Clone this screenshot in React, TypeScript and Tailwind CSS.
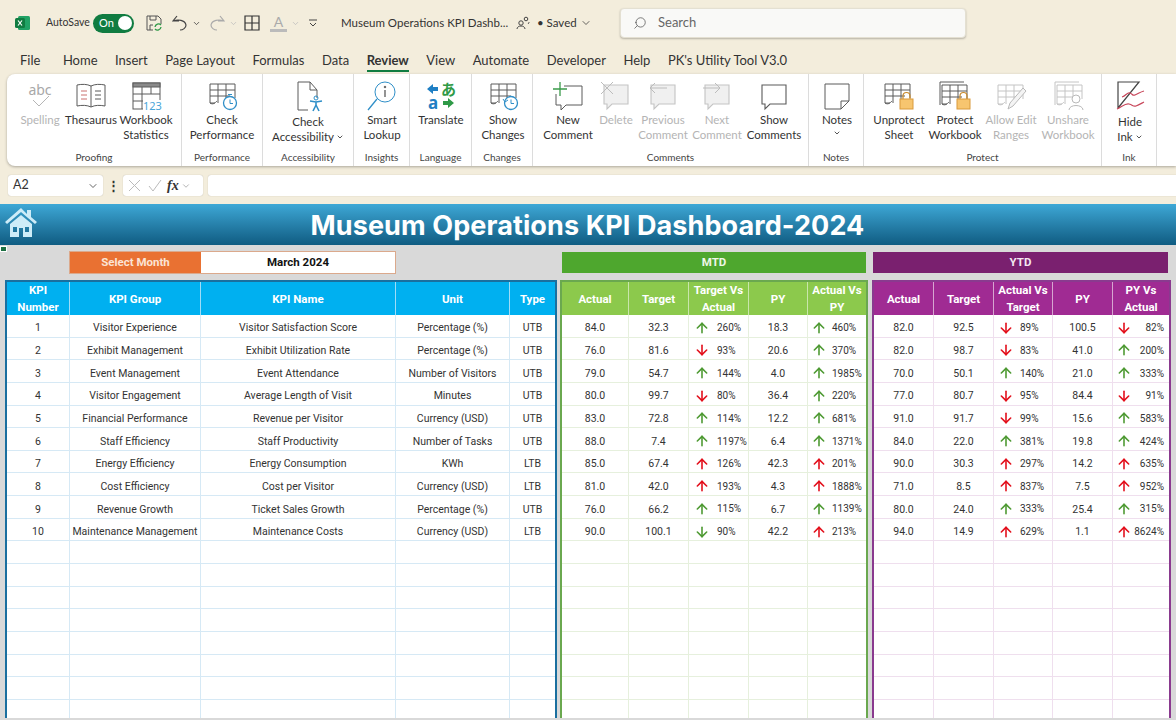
import React from "react";
import { ArrowDown, ArrowUp, ChevronDown, Search } from "lucide-react";

type Dir = "ug" | "dr" | "ur" | "dg";
type Perf = [string, string, Dir, string, string, Dir, string];

const kpis = [
  ["1", "Visitor Experience", "Visitor Satisfaction Score", "Percentage (%)", "UTB"],
  ["2", "Exhibit Management", "Exhibit Utilization Rate", "Percentage (%)", "UTB"],
  ["3", "Event Management", "Event Attendance", "Number of Visitors", "UTB"],
  ["4", "Visitor Engagement", "Average Length of Visit", "Minutes", "UTB"],
  ["5", "Financial Performance", "Revenue per Visitor", "Currency (USD)", "UTB"],
  ["6", "Staff Efficiency", "Staff Productivity", "Number of Tasks", "UTB"],
  ["7", "Energy Efficiency", "Energy Consumption", "KWh", "LTB"],
  ["8", "Cost Efficiency", "Cost per Visitor", "Currency (USD)", "LTB"],
  ["9", "Revenue Growth", "Ticket Sales Growth", "Percentage (%)", "UTB"],
  ["10", "Maintenance Management", "Maintenance Costs", "Currency (USD)", "LTB"],
];

const mtd: Perf[] = [
  ["84.0", "32.3", "ug", "260%", "18.3", "ug", "460%"],
  ["76.0", "81.6", "dr", "93%", "20.6", "ug", "370%"],
  ["79.0", "54.7", "ug", "144%", "4.0", "ug", "1985%"],
  ["80.0", "99.7", "dr", "80%", "36.4", "ug", "220%"],
  ["83.0", "72.8", "ug", "114%", "12.2", "ug", "681%"],
  ["88.0", "7.4", "ug", "1197%", "6.4", "ug", "1371%"],
  ["85.0", "67.4", "ur", "126%", "42.3", "ur", "201%"],
  ["81.0", "42.0", "ur", "193%", "4.3", "ur", "1888%"],
  ["76.0", "66.2", "ug", "115%", "6.7", "ug", "1139%"],
  ["90.0", "100.1", "dg", "90%", "42.2", "ur", "213%"],
];

const ytd: Perf[] = [
  ["82.0", "92.5", "dr", "89%", "100.5", "dr", "82%"],
  ["82.0", "98.7", "dr", "83%", "41.0", "ug", "200%"],
  ["70.0", "50.1", "ug", "140%", "21.0", "ug", "333%"],
  ["77.0", "80.7", "dr", "95%", "84.4", "dr", "91%"],
  ["91.0", "91.7", "dr", "99%", "15.6", "ug", "583%"],
  ["84.0", "22.0", "ug", "381%", "19.8", "ug", "424%"],
  ["90.0", "30.3", "ur", "297%", "14.2", "ur", "635%"],
  ["71.0", "8.5", "ur", "837%", "7.5", "ur", "952%"],
  ["80.0", "24.0", "ug", "333%", "25.4", "ug", "315%"],
  ["94.0", "14.9", "ur", "629%", "1.1", "ur", "8624%"],
];

const blanks = Array.from({ length: 8 });

// ribbon icons, all on a 32x28 box
const Ico = ({ children }: { children: React.ReactNode }) => (
  <svg width="32" height="28" viewBox="0 0 32 28" fill="none" stroke="#5a5a5a" strokeWidth="1" className="overflow-visible">
    {children}
  </svg>
);

const Cells = ({ x = 4, y = 2, c = "#5a5a5a" }: { x?: number; y?: number; c?: string }) => (
  <g stroke={c}>
    <path d={`M${x + 5} ${y + 19}H${x}V${y}H${x + 25}V${y + 14}`} />
    <path d={`M${x} ${y + 6}H${x + 25}M${x} ${y + 12}H${x + 20}M${x + 8} ${y}V${y + 19}M${x + 16} ${y}V${y + 16}`} />
    <path d={`M${x} ${y + 19}c3 2 5 0 7-2`} />
  </g>
);

const Lock = ({ x, y }: { x: number; y: number }) => (
  <g>
    <path d={`M${x + 3} ${y + 6}v-3a3.5 3.5 0 0 1 7 0v3`} stroke="#c98a2c" strokeWidth="1.2" />
    <rect x={x} y={y + 6} width="13" height="10" fill="#f7c56f" stroke="#d99a3c" />
  </g>
);

const Bubble = ({ c = "#5a5a5a", f = "none" }: { c?: string; f?: string }) => (
  <path d="M4 3h24v19H12l-5 5v-5H4z" stroke={c} fill={f} strokeWidth="1.1" />
);

const icons: Record<string, React.ReactNode> = {
  spelling: (
    <Ico>
      <text x="16" y="13" textAnchor="middle" fontSize="14" fill="#a8a8a8" stroke="none" fontFamily="Noto Sans">abc</text>
      <path d="M9 18l6 6 10-10" stroke="#b5b5b5" />
    </Ico>
  ),
  thesaurus: (
    <Ico>
      <path d="M2 3c5-1 10-1 14 1 4-2 9-2 14-1v21c-5-1-10-1-14 1-4-2-9-2-14-1z" />
      <path d="M16 4v21" />
      <path d="M6 9h6M6 13h6M6 17h6" stroke="#c9706f" />
      <path d="M20 9h6M20 13h6M20 17h6" />
    </Ico>
  ),
  workbook: (
    <Ico>
      <rect x="3" y="1" width="27" height="26" />
      <rect x="3" y="1" width="27" height="4" fill="#8a8a8a" />
      <path d="M3 12h27M3 19h11M12 5v22M21 5v7" />
      <rect x="13" y="18" width="18" height="10" fill="#fff" stroke="none" />
      <text x="13" y="27.500" fontSize="11" fill="#4aa5d8" stroke="none" fontFamily="Noto Sans">123</text>
    </Ico>
  ),
  performance: (
    <Ico>
      <Cells />
      <circle cx="24" cy="21" r="6.5" stroke="#2f8fc8" strokeWidth="1.3" fill="#fff" />
      <path d="M24 17.5v4h3M22 12.5h4" stroke="#2f8fc8" />
    </Ico>
  ),
  accessibility: (
    <Ico>
      <path d="M6 28V0h12l7 8v8M6 28h10M18 0v8h7" />
      <circle cx="24" cy="16" r="2" stroke="#2f8fc8" />
      <path d="M18 19l6 1 6-1M24 20v3l-3 6M24 23l3 6" stroke="#2f8fc8" strokeWidth="1.6" />
    </Ico>
  ),
  smart: (
    <Ico>
      <circle cx="19" cy="10" r="10" stroke="#2f8fc8" />
      <path d="M11 17L2 28" stroke="#2f8fc8" strokeWidth="1.3" />
      <path d="M19 8v7" stroke="#5a5a5a" strokeWidth="1.3" />
      <circle cx="19" cy="5" r=".8" fill="#5a5a5a" />
    </Ico>
  ),
  translate: (
    <Ico>
      <path d="M13 5H8V2L2 7l6 5V9h5z" fill="#1f7fc4" stroke="none" />
      <text x="16" y="13" fontSize="15" fontWeight="700" fill="#2f9a47" stroke="none" fontFamily="Noto Sans CJK JP">あ</text>
      <text x="3" y="27" fontSize="17" fontWeight="700" fill="#1f7fc4" stroke="none" fontFamily="Noto Sans">a</text>
      <path d="M18 19h5v-3l6 5-6 5v-3h-5z" fill="#2f9a47" stroke="none" />
    </Ico>
  ),
  changes: (
    <Ico>
      <Cells />
      <circle cx="24" cy="21" r="6.5" stroke="#2f8fc8" strokeWidth="1.3" fill="#fff" />
      <path d="M24 17.5v4h3M16 17l2 3 3-2" stroke="#2f8fc8" />
    </Ico>
  ),
  newComment: (
    <Ico>
      <path d="M12 4h18v19H14l-5 5v-5H4V12" stroke="#5a5a5a" />
      <path d="M8 0v14M1 7h14" stroke="#3a9a4a" strokeWidth="1.3" />
    </Ico>
  ),
  del: (
    <Ico>
      <Bubble c="#c4c4c4" f="#f0f0f0" />
      <path d="M1 0l12 12M13 0L1 12" stroke="#bcbcbc" />
    </Ico>
  ),
  prev: (
    <Ico>
      <Bubble c="#c4c4c4" f="#f0f0f0" />
      <path d="M20 6H3M8 1L3 6l5 5" stroke="#bcbcbc" />
    </Ico>
  ),
  next: (
    <Ico>
      <Bubble c="#c4c4c4" f="#f0f0f0" />
      <path d="M2 6h17M14 1l5 5-5 5" stroke="#bcbcbc" />
    </Ico>
  ),
  show: (
    <Ico>
      <Bubble />
    </Ico>
  ),
  notes: (
    <Ico>
      <path d="M4 2h24v17l-8 8H4z" />
      <path d="M28 19h-8v8" />
    </Ico>
  ),
  unprotect: (
    <Ico>
      <Cells x={2} />
      <Lock x={17} y={11} />
    </Ico>
  ),
  protect: (
    <Ico>
      <path d="M1 23V0h24" />
      <Cells x={3} y={3} />
      <Lock x={18} y={11} />
    </Ico>
  ),
  allow: (
    <Ico>
      <Cells x={3} y={3} c="#c4c4c4" />
      <path d="M28 6l3 3-13 15-5 3 2-6z" stroke="#b9b9b9" fill="#f4f4f4" />
    </Ico>
  ),
  unshare: (
    <Ico>
      <path d="M3 23V0h24" stroke="#c4c4c4" />
      <Cells x={5} y={3} c="#c4c4c4" />
      <circle cx="24" cy="17" r="4" stroke="#b9b9b9" fill="#fff" />
      <path d="M17 28c0-6 14-6 14 0" stroke="#b9b9b9" fill="#fff" />
    </Ico>
  ),
  ink: (
    <Ico>
      <path d="M4 26V0h21L4 26" stroke="#444" strokeWidth="1.2" />
      <path d="M8 15c4-1 5-5 8-4s2 3 5 2 5-3 9-4M3 27c5-2 8-6 12-5s4 3 7 2 6-3 8-4" stroke="#c8465a" strokeWidth="1.2" />
    </Ico>
  ),
};

const RibbonBtn = ({
  icon,
  lines,
  w,
  off,
  caret,
  low,
}: {
  icon: string;
  lines: string[];
  w: string;
  off?: boolean;
  caret?: boolean;
  low?: boolean;
}) => (
  <div className={`flex flex-col items-center shrink-0 ${w}`}>
    <div className="h-[28px] flex justify-center">{icons[icon]}</div>
    <div className={`whitespace-nowrap text-center text-[11.5px] leading-[15px] ${low ? "mt-[4px]" : "mt-[2px]"} ${off ? "text-[#b4b4b4]" : "text-[#333]"}`}>
      {lines.map((l, i) => (
        <div key={l} className="flex items-center justify-center gap-[2px]">
          {l}
          {caret && i === lines.length - 1 && <ChevronDown size={8} strokeWidth={2.5} />}
        </div>
      ))}
    </div>
  </div>
);

const Group = ({ label, w, pl, children }: { label: string; w: string; pl: string; children: React.ReactNode }) => (
  <div className={`relative h-full shrink-0 border-r border-[#dcdcdc] ${w}`}>
    <div className={`flex pt-[8px] ${pl}`}>{children}</div>
    <div className="absolute bottom-[2px] left-0 right-0 text-center text-[10px] leading-[14px] text-[#444]">{label}</div>
  </div>
);

const ArrowMark = ({ d }: { d: Dir }) => {
  const color = d === "ug" || d === "dg" ? "text-[#4e9a33]" : "text-[#e3101c]";
  return d === "ug" || d === "ur" ? (
    <ArrowUp size={16} strokeWidth={2.4} className={`shrink-0 ${color}`} />
  ) : (
    <ArrowDown size={16} strokeWidth={2.4} className={`shrink-0 ${color}`} />
  );
};

const Perfs = ({ rows, cols, line, pad1, pad2, lastRight }: { rows: Perf[]; cols: string; line: string; pad1: string; pad2: string; lastRight?: boolean }) => (
  <>
    {rows.map((r, i) => (
      <div key={i} className={`grid h-[22.65px] border-b ${cols} ${line}`}>
        <div className={`flex items-center justify-center pt-[5px] border-r ${line}`}>{r[0]}</div>
        <div className={`flex items-center justify-center pt-[5px] border-r ${line}`}>{r[1]}</div>
        <div className={`flex items-center pt-[4px] border-r text-[10px] ${pad1} ${line}`}>
          <ArrowMark d={r[2]} />
          <span>{r[3]}</span>
        </div>
        <div className={`flex items-center justify-center pt-[5px] border-r ${line}`}>{r[4]}</div>
        <div className={`flex items-center pt-[4px] text-[10px] ${pad2}`}>
          <ArrowMark d={r[5]} />
          <span className={lastRight ? "ml-auto pr-[5px]" : ""}>{r[6]}</span>
        </div>
      </div>
    ))}
    {blanks.map((_, i) => (
      <div key={i} className={`grid h-[22.65px] border-b ${cols} ${line}`}>
        <div className={`border-r ${line}`} />
        <div className={`border-r ${line}`} />
        <div className={`border-r ${line}`} />
        <div className={`border-r ${line}`} />
        <div />
      </div>
    ))}
  </>
);

const HeadCell = ({ children, last, line }: { children: React.ReactNode; last?: boolean; line: string }) => (
  <div className={`flex items-center justify-center text-center font-bold text-white text-[11.5px] leading-[17px] ${last ? "" : `border-r ${line}`}`}>
    {children}
  </div>
);

const leftCols = "grid-cols-[63px_131px_195px_114px_45px]";
const mtdCols = "grid-cols-[67px_60px_60px_59px_58px]";
const ytdCols = "grid-cols-[60px_60px_59px_60px_56px]";

export default function App() {
  return (
    <div className="w-[1176px] h-[720px] overflow-hidden flex flex-col bg-[#f3eddc] text-[#333] font-['Lato','Noto_Sans',sans-serif]">
      {/* Title bar */}
      <div className="h-[44px] flex items-center shrink-0 pt-[2px] text-[#333]">
        <svg width="16" height="16" viewBox="0 0 16 16" className="ml-[15px]">
          <rect x="3" y="1" width="12" height="14" rx="1.5" fill="#21a366" />
          <rect x="0" y="3" width="10" height="10" rx="1.5" fill="#107c41" />
          <path d="M3 5.5l4 5M7 5.5l-4 5" stroke="#fff" strokeWidth="1.2" />
        </svg>
        <span className="ml-[15px] w-[41px] text-[10.5px] whitespace-nowrap">AutoSave</span>
        <div className="ml-[6px] w-[41px] h-[19px] rounded-full bg-[#107c41] flex items-center justify-between pl-[6px] pr-[2px] text-white text-[11px]">
          On
          <span className="w-[14px] h-[14px] rounded-full bg-white" />
        </div>
        <svg width="16" height="16" viewBox="0 0 16 16" fill="none" stroke="#555" className="ml-[12px]">
          <path d="M1 1h11l3 3v5M1 1v14h6M4 1v4h6V1M4 15v-5h3" />
          <path d="M9 12a3.500 3.500 0 0 1 6-2M15 12a3.500 3.500 0 0 1-6 2" stroke="#2f9a47" strokeWidth="1.3" />
        </svg>
        <svg width="16" height="16" viewBox="0 0 16 16" fill="none" stroke="#444" strokeWidth="1.2" className="ml-[10px]">
          <path d="M5 1L1 6h6M1 6c5-2 12-1 13 4 0 3-3 5-6 5" />
        </svg>
        <ChevronDown size={9} strokeWidth={2} className="ml-[4px]" />
        <svg width="16" height="16" viewBox="0 0 16 16" fill="none" stroke="#aaa" strokeWidth="1.2" className="ml-[8px]">
          <path d="M11 1l4 5H9M15 6C10 4 3 5 2 10c0 3 3 5 6 5" />
        </svg>
        <ChevronDown size={9} strokeWidth={2} className="ml-[4px] text-[#bbb]" />
        <svg width="16" height="16" viewBox="0 0 16 16" fill="none" stroke="#333" strokeWidth="1.2" className="ml-[6px]">
          <path d="M1 1h14v14H1zM8 1v14M1 8h14" />
        </svg>
        <div className="ml-[10px] w-[17px] flex flex-col items-center text-[14px] leading-[14px] text-[#aaa] border-b-[3px] border-[#bbb]">A</div>
        <ChevronDown size={9} strokeWidth={2} className="ml-[4px] text-[#bbb]" />
        <svg width="10" height="10" viewBox="0 0 10 10" fill="none" stroke="#444" className="ml-[8px]">
          <path d="M1 2h8M2 5l3 3 3-3" />
        </svg>
        <span className="ml-[23px] w-[165px] text-[11.5px] whitespace-nowrap">Museum Operations KPI Dashb...</span>
        <svg width="14" height="14" viewBox="0 0 14 14" fill="none" stroke="#444" className="ml-[10px]">
          <circle cx="5" cy="7" r="2.200" />
          <path d="M1 13c0-4 8-4 8 0" />
          <circle cx="10" cy="3" r="1.800" />
          <path d="M12 8c1-1 1-2 1-2" />
        </svg>
        <span className="ml-[7px] w-[41px] text-[11.5px] whitespace-nowrap">• Saved</span>
        <ChevronDown size={12} strokeWidth={1.5} className="ml-[2px]" />
        <div className="ml-[28px] w-[346px] h-[30px] rounded-[4px] bg-[#f9f9f7] border border-[#e4e0d2] shadow-[0_1px_2px_rgba(0,0,0,0.25)] flex items-center pl-[12px] text-[13px] text-[#666]">
          <Search size={14} strokeWidth={1.3} className="-scale-x-100 text-[#555]" />
          <span className="ml-[11px]">Search</span>
        </div>
      </div>

      {/* Tabs */}
      <div className="h-[30px] shrink-0 flex items-start pt-[6px] pl-[20px] gap-[17.5px] text-[13px] leading-[20px] text-[#333]">
        <span className="mr-[5px]">File</span>
        <span>Home</span>
        <span>Insert</span>
        <span>Page Layout</span>
        <span>Formulas</span>
        <span>Data</span>
        <span className="relative font-bold">
          Review
          <span className="absolute left-0 right-0 top-[20px] h-[2px] bg-[#107c41]" />
        </span>
        <span>View</span>
        <span>Automate</span>
        <span>Developer</span>
        <span>Help</span>
        <span>PK's Utility Tool V3.0</span>
      </div>

      {/* Ribbon */}
      <div className="ml-[7px] h-[92px] shrink-0 bg-white rounded-l-lg shadow-[0_1px_3px_rgba(0,0,0,0.3)] flex">
        <Group label="Proofing" w="w-[175px]" pl="pl-[10px]">
          <RibbonBtn icon="spelling" lines={["Spelling"]} w="w-[46px]" off />
          <RibbonBtn icon="thesaurus" lines={["Thesaurus"]} w="w-[56px]" />
          <RibbonBtn icon="workbook" lines={["Workbook", "Statistics"]} w="w-[54px]" />
        </Group>
        <Group label="Performance" w="w-[81px]" pl="pl-[10px]">
          <RibbonBtn icon="performance" lines={["Check", "Performance"]} w="w-[60px]" />
        </Group>
        <Group label="Accessibility" w="w-[91px]" pl="pl-[10px]">
          <RibbonBtn icon="accessibility" lines={["Check", "Accessibility"]} w="w-[70px]" caret low />
        </Group>
        <Group label="Insights" w="w-[56px]" pl="pl-[3px]">
          <RibbonBtn icon="smart" lines={["Smart", "Lookup"]} w="w-[50px]" />
        </Group>
        <Group label="Language" w="w-[62px]" pl="pl-[4px]">
          <RibbonBtn icon="translate" lines={["Translate"]} w="w-[54px]" />
        </Group>
        <Group label="Changes" w="w-[61px]" pl="pl-[6px]">
          <RibbonBtn icon="changes" lines={["Show", "Changes"]} w="w-[50px]" />
        </Group>
        <Group label="Comments" w="w-[276px]" pl="pl-[11px]">
          <RibbonBtn icon="newComment" lines={["New", "Comment"]} w="w-[48px]" />
          <RibbonBtn icon="del" lines={["Delete"]} w="w-[48px]" off />
          <RibbonBtn icon="prev" lines={["Previous", "Comment"]} w="w-[46px]" off />
          <RibbonBtn icon="next" lines={["Next", "Comment"]} w="w-[62px]" off />
          <RibbonBtn icon="show" lines={["Show", "Comments"]} w="w-[52px]" />
        </Group>
        <Group label="Notes" w="w-[55px]" pl="pl-[4px]">
          <div className="flex flex-col items-center w-[48px]">
            <div className="h-[28px]">{icons.notes}</div>
            <div className="mt-[2px] text-[11.5px] leading-[15px] text-[#333]">Notes</div>
            <ChevronDown size={8} strokeWidth={2.5} className="mt-[2px]" />
          </div>
        </Group>
        <Group label="Protect" w="w-[238px]" pl="pl-[7px]">
          <RibbonBtn icon="unprotect" lines={["Unprotect", "Sheet"]} w="w-[56px]" />
          <RibbonBtn icon="protect" lines={["Protect", "Workbook"]} w="w-[56px]" />
          <RibbonBtn icon="allow" lines={["Allow Edit", "Ranges"]} w="w-[56px]" off />
          <RibbonBtn icon="unshare" lines={["Unshare", "Workbook"]} w="w-[58px]" off />
        </Group>
        <Group label="Ink" w="w-[55px]" pl="pl-[7px]">
          <RibbonBtn icon="ink" lines={["Hide", "Ink"]} w="w-[42px]" caret low />
        </Group>
      </div>

      {/* Formula bar */}
      <div className="mt-[9px] ml-[8px] h-[21px] shrink-0 flex items-center">
        <div className="w-[95px] h-full bg-white rounded-[3px] flex items-center justify-between pl-[5px] pr-[4px] text-[12.5px] text-[#333] shadow-[0_0_1px_rgba(0,0,0,0.3)]">
          A2
          <ChevronDown size={12} strokeWidth={1.5} />
        </div>
        <div className="w-[20px] text-center text-[13px] font-bold leading-[13px]">⋮</div>
        <div className="w-[80px] h-full bg-white rounded-[3px] flex items-center pl-[5px] shadow-[0_0_1px_rgba(0,0,0,0.3)]">
          <svg width="34" height="13" viewBox="0 0 34 13" fill="none" stroke="#bbb">
            <path d="M1 1l11 11M12 1L1 12M21 7l4 5 8-11" />
          </svg>
          <span className="ml-[5px] text-[14px] font-['Liberation_Serif',serif] italic font-bold text-[#333]">fx</span>
          <ChevronDown size={10} strokeWidth={1.5} className="ml-[2px] text-[#888]" />
        </div>
        <div className="ml-[5px] flex-1 h-full bg-white rounded-l-[3px] shadow-[0_0_1px_rgba(0,0,0,0.3)]" />
      </div>

      {/* Sheet */}
      <div className="mt-[8px] flex-1 flex flex-col bg-[#d9d9d9] font-['Roboto',sans-serif]">
        <div className="relative h-[41px] shrink-0 flex items-center justify-center pt-[3px] bg-gradient-to-b from-[#3ea8d6] to-[#0f5c82]">
          <svg width="32" height="29" viewBox="0 0 32 29" className="absolute left-[5px] top-[4px]" fill="#cdecf8">
            <path d="M16 0L0 14l2 2L16 4l14 12 2-2-6-5V2h-4v4z" />
            <path d="M5 16L16 7l11 9v13h-9v-9h-4v9H5zM8 19v5h4v-5zM20 19v5h4v-5z" fillRule="evenodd" />
          </svg>
          <h1 className="font-['Inter',sans-serif] font-bold text-white text-[27px] tracking-[0.1px] ml-[-1px]">Museum Operations KPI Dashboard-2024</h1>
        </div>

        <div className="relative flex-1 flex pl-[5px]">
          <span className="absolute left-0 top-[1px] w-[7px] h-[6px] bg-[#1d6f42] border border-white" />

          {/* KPI table */}
          <div className="w-[552px] shrink-0">
            <div className="mt-[6px] ml-[64px] w-[327px] h-[23px] flex border border-[#dba98c] text-[11.5px] font-bold">
              <div className="w-[131px] bg-[#e97132] text-[#fbe4d5] flex items-center justify-center">Select Month</div>
              <div className="flex-1 bg-white text-[#111] flex items-center justify-center">March 2024</div>
            </div>
            <div className="mt-[6px] h-[438px] overflow-hidden bg-white border-x-2 border-t-2 border-[#1a6f9f] text-[10.5px] text-[#333]">
              <div className={`grid h-[33px] bg-[#00b0f0] ${leftCols}`}>
                <HeadCell line="border-[#9fdcf7]">KPI<br />Number</HeadCell>
                <HeadCell line="border-[#9fdcf7]">KPI Group</HeadCell>
                <HeadCell line="border-[#9fdcf7]">KPI Name</HeadCell>
                <HeadCell line="border-[#9fdcf7]">Unit</HeadCell>
                <HeadCell last line="">Type</HeadCell>
              </div>
              {kpis.map((k) => (
                <div key={k[0]} className={`grid h-[22.65px] border-b border-[#d6e9f5] ${leftCols}`}>
                  <div className="flex items-center justify-center pt-[5px] border-r border-[#d6e9f5]">{k[0]}</div>
                  <div className="flex items-center justify-center pt-[5px] border-r border-[#d6e9f5] whitespace-nowrap">{k[1]}</div>
                  <div className="flex items-center justify-center pt-[5px] border-r border-[#d6e9f5]">{k[2]}</div>
                  <div className="flex items-center justify-center pt-[5px] border-r border-[#d6e9f5]">{k[3]}</div>
                  <div className="flex items-center justify-center pt-[5px]">{k[4]}</div>
                </div>
              ))}
              {blanks.map((_, i) => (
                <div key={i} className={`grid h-[22.65px] border-b border-[#d6e9f5] ${leftCols}`}>
                  <div className="border-r border-[#d6e9f5]" />
                  <div className="border-r border-[#d6e9f5]" />
                  <div className="border-r border-[#d6e9f5]" />
                  <div className="border-r border-[#d6e9f5]" />
                  <div />
                </div>
              ))}
            </div>
          </div>

          {/* MTD */}
          <div className="ml-[3px] w-[308px] shrink-0">
            <div className="mt-[7px] mx-[2px] h-[21px] bg-[#4ea72e] text-[#eef7e8] text-[11.5px] font-bold flex items-center justify-center">MTD</div>
            <div className="mt-[7px] h-[438px] overflow-hidden bg-white border-x-2 border-t-2 border-[#6aa84f] text-[10.5px] text-[#333]">
              <div className={`grid h-[33px] bg-[#8cc94c] ${mtdCols}`}>
                <HeadCell line="border-[#c9e6ac]">Actual</HeadCell>
                <HeadCell line="border-[#c9e6ac]">Target</HeadCell>
                <HeadCell line="border-[#c9e6ac]">Target Vs<br />Actual</HeadCell>
                <HeadCell line="border-[#c9e6ac]">PY</HeadCell>
                <HeadCell last line="">Actual Vs<br />PY</HeadCell>
              </div>
              <Perfs rows={mtd} cols={mtdCols} line="border-[#e6f0dd]" pad1="pl-[5px] gap-[7px]" pad2="pl-[3px] gap-[5px]" />
            </div>
          </div>

          {/* YTD */}
          <div className="ml-[4px] w-[299px] shrink-0">
            <div className="mt-[7px] ml-[1px] w-[295px] h-[21px] bg-[#7a206f] text-[#f3e6f1] text-[11.5px] font-bold flex items-center justify-center">YTD</div>
            <div className="mt-[7px] h-[438px] overflow-hidden bg-white border-x-2 border-t-2 border-[#8a3a8f] text-[10.5px] text-[#333]">
              <div className={`grid h-[33px] bg-[#a02b93] ${ytdCols}`}>
                <HeadCell line="border-[#d6a6d0]">Actual</HeadCell>
                <HeadCell line="border-[#d6a6d0]">Target</HeadCell>
                <HeadCell line="border-[#d6a6d0]">Actual Vs<br />Target</HeadCell>
                <HeadCell line="border-[#d6a6d0]">PY</HeadCell>
                <HeadCell last line="">PY Vs<br />Actual</HeadCell>
              </div>
              <Perfs rows={ytd} cols={ytdCols} line="border-[#efdfee]" pad1="pl-[4px] gap-[6px]" pad2="pl-[3px]" lastRight />
            </div>
          </div>
        </div>
      </div>
    </div>
  );
}
